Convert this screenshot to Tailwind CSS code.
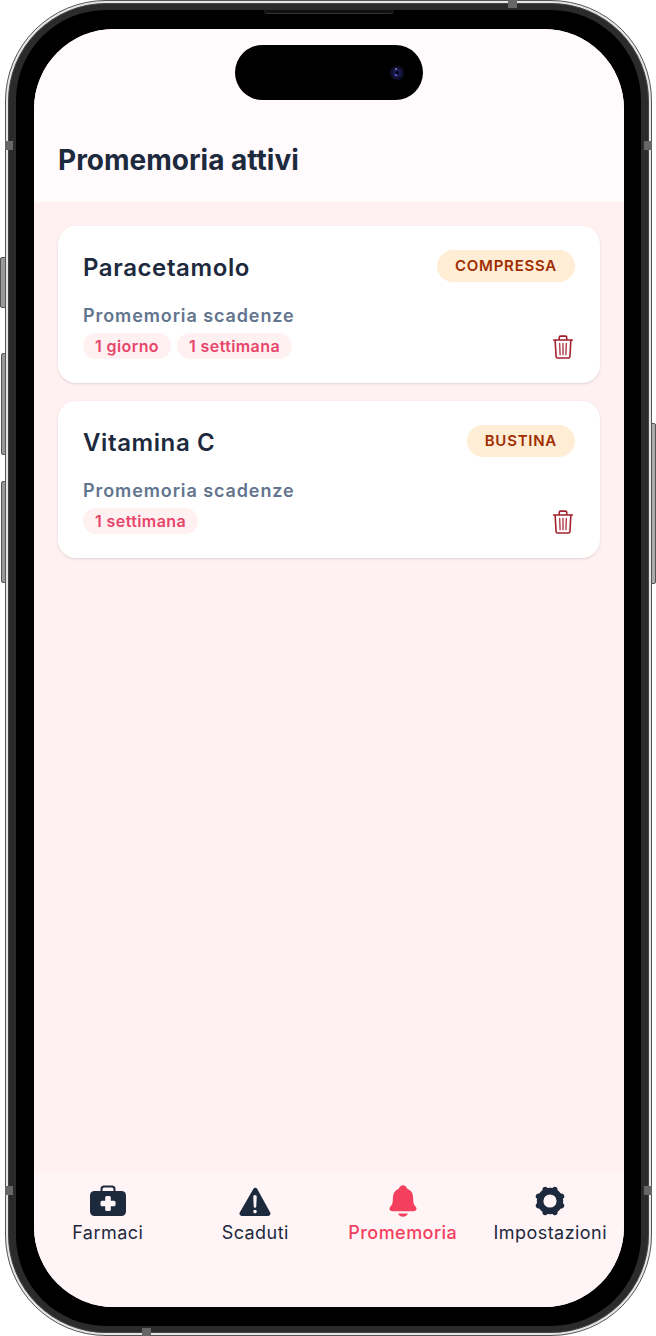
<!DOCTYPE html>
<html lang="it">
  <head>
    <meta charset="UTF-8" />
    <meta name="viewport" content="width=device-width, initial-scale=1.0" />
    <title>Promemoria attivi</title>
    <script src="https://cdn.jsdelivr.net/npm/@tailwindcss/browser@4"></script>
  </head>
  <body class="bg-white font-['Inter',sans-serif] text-slate-800">
    <div class="relative flex min-h-screen pl-[5px] pr-1">
      <!-- Side buttons -->
      <div class="absolute left-0 top-[257px] h-[51px] w-2 rounded-l-xs border border-[#555] bg-[#999]"></div>
      <div class="absolute left-px top-[353px] h-[102px] w-2 rounded-l-xs border border-[#555] bg-[#999]"></div>
      <div class="absolute left-px top-[481px] h-[102px] w-2 rounded-l-xs border border-[#555] bg-[#999]"></div>
      <div class="absolute right-0 top-[423px] h-[161px] w-2 rounded-r-xs border border-[#555] bg-[#aaa]"></div>

      <!-- Phone frame -->
      <div class="relative flex flex-1 rounded-[101px] border border-[#555] bg-[#e4e4e4] p-[2px]">
        <div class="flex flex-1 rounded-[98px] border border-[#444] bg-[#2b2b2b] px-[7px] py-[6px]">
          <div class="flex flex-1 rounded-[90px] bg-black pl-[18px] pr-[17px] py-[19px]">
            <div class="relative flex min-w-0 flex-1 flex-col overflow-hidden rounded-[80px] bg-[#fff1f1]">
              <div class="absolute left-1/2 top-4 flex h-[55px] w-[188px] -translate-x-1/2 items-center justify-end rounded-full bg-black pr-[18px]">
                <svg class="size-4" viewBox="0 0 16 16">
                  <circle cx="8" cy="8" r="7" fill="#10102c" />
                  <circle cx="8" cy="8" r="4" fill="#1d1d58" />
                  <circle cx="8" cy="8" r="2" fill="#05051a" />
                  <circle cx="7" cy="4" r="1" fill="#7d80c8" />
                  <circle cx="7" cy="10" r="1.3" fill="#5156b4" />
                </svg>
              </div>

              <header class="bg-[#fffafc] px-6 pb-6 pt-[113px]">
                <h1 class="text-[28px] leading-9 font-bold">Promemoria attivi</h1>
              </header>

              <main class="flex flex-1 flex-col gap-[18px] px-6 py-6">
                <section class="rounded-[18px] bg-white px-[25px] py-6 shadow-sm">
                  <div class="flex items-start justify-between">
                    <h2 class="pt-0.5 text-2xl leading-8 font-semibold tracking-wide">Paracetamolo</h2>
                    <span class="rounded-full bg-[#ffedd5] px-[18px] py-1.5 text-[15px] leading-5 font-semibold tracking-wider text-orange-800">COMPRESSA</span>
                  </div>
                  <div class="flex items-end justify-between pt-5">
                    <div>
                      <p class="text-lg leading-6 font-semibold tracking-wider text-slate-500">Promemoria scadenze</p>
                      <div class="flex gap-1.5 pt-[5px]">
                        <span class="rounded-full bg-[#fff1f2] px-3 text-base leading-[26px] font-semibold tracking-wide text-[#e8456a]">1 giorno</span>
                        <span class="rounded-full bg-[#fff1f2] px-3 text-base leading-[26px] font-semibold tracking-wide text-[#e8456a]">1 settimana</span>
                      </div>
                    </div>
                    <button type="button" aria-label="Elimina promemoria Paracetamolo" class="text-[#a3212c]">
                      <svg class="size-6" viewBox="0 0 512 512" fill="none" stroke="currentColor" stroke-width="34" stroke-linecap="round" stroke-linejoin="round">
                        <path d="M88 108l20 350c1 18 14 32 32 32h232c18 0 31-14 32-32l20-350M56 108h400M176 108V52a28 28 0 0128-28h104a28 28 0 0128 28v56" />
                        <path stroke-width="26" d="M256 180v240M186 180l8 240M326 180l-8 240" />
                      </svg>
                    </button>
                  </div>
                </section>

                <section class="rounded-[18px] bg-white px-[25px] py-6 shadow-sm">
                  <div class="flex items-start justify-between">
                    <h2 class="pt-0.5 text-2xl leading-8 font-semibold tracking-wide">Vitamina C</h2>
                    <span class="rounded-full bg-[#ffedd5] px-[18px] py-1.5 text-[15px] leading-5 font-semibold tracking-wider text-orange-800">BUSTINA</span>
                  </div>
                  <div class="flex items-end justify-between pt-5">
                    <div>
                      <p class="text-lg leading-6 font-semibold tracking-wider text-slate-500">Promemoria scadenze</p>
                      <div class="flex gap-1.5 pt-[5px]">
                        <span class="rounded-full bg-[#fff1f2] px-3 text-base leading-[26px] font-semibold tracking-wide text-[#e8456a]">1 settimana</span>
                      </div>
                    </div>
                    <button type="button" aria-label="Elimina promemoria Vitamina C" class="text-[#a3212c]">
                      <svg class="size-6" viewBox="0 0 512 512" fill="none" stroke="currentColor" stroke-width="34" stroke-linecap="round" stroke-linejoin="round">
                        <path d="M88 108l20 350c1 18 14 32 32 32h232c18 0 31-14 32-32l20-350M56 108h400M176 108V52a28 28 0 0128-28h104a28 28 0 0128 28v56" />
                        <path stroke-width="26" d="M256 180v240M186 180l8 240M326 180l-8 240" />
                      </svg>
                    </button>
                  </div>
                </section>
              </main>

              <nav class="grid grid-cols-4 bg-[#fff5f6] pb-[60px] pt-3">
                <a href="#farmaci" class="flex flex-col items-center text-lg leading-7 tracking-wide">
                  <svg class="size-9" viewBox="0 0 36 36">
                    <path d="M11.5 9V6a2.500 2.500 0 012.500-2.500h8A2.500 2.500 0 0124.500 6v3" fill="none" stroke="currentColor" stroke-width="2" />
                    <rect x="0" y="8" width="36" height="25" rx="4.500" fill="currentColor" />
                    <rect x="10.5" y="17.700" width="15" height="5.600" rx="1.500" fill="#fff5f6" />
                    <rect x="15.2" y="13" width="5.600" height="15" rx="1.500" fill="#fff5f6" />
                  </svg>
                  Farmaci
                </a>
                <a href="#scaduti" class="flex flex-col items-center text-lg leading-7 tracking-wide">
                  <svg class="size-9" viewBox="0 0 512 512" fill="currentColor">
                    <path transform="translate(5 12)" d="M467 409L283 73c-12-22-44-22-56 0L34 409a32 32 0 0028 47h378a32 32 0 0027-47zM251 420a26 26 0 110-52 26 26 0 010 52zm25-235l-7 138a18 18 0 01-36 0l-7-138a25 25 0 0150 0z" />
                  </svg>
                  Scaduti
                </a>
                <a href="#promemoria" aria-current="page" class="flex flex-col items-center text-lg leading-7 font-medium tracking-wide text-[#f43f5e]">
                  <svg class="size-9" viewBox="0 0 512 512" fill="currentColor">
                    <path d="M440 341l-5-6c-22-26-35-42-35-118 0-39-9-71-28-95-13-17-32-31-56-41-9-30-33-49-60-49s-51 19-60 49c-56 24-84 68-84 136 0 76-13 92-35 118l-5 6a35 35 0 00-5 38c6 13 19 21 34 21h310c15 0 28-8 34-21a35 35 0 00-5-38zM256 480a80 80 0 0070-42 4 4 0 00-3-6H189a4 4 0 00-3 6 80 80 0 0070 42z" />
                  </svg>
                  Promemoria
                </a>
                <a href="#impostazioni" class="flex flex-col items-center text-lg leading-7 tracking-wide">
                  <svg class="size-9" viewBox="0 0 36 36" fill="none" stroke="currentColor" stroke-linecap="round">
                    <circle cx="18" cy="18" r="9.900" stroke-width="6.600" />
                    <g stroke-width="5.400" transform="rotate(22.500 18 18)">
                      <path d="M18 7V5.500M18 29v1.500M7 18H5.500M29 18h1.500" />
                      <path d="M18 7V5.500M18 29v1.500M7 18H5.500M29 18h1.500" transform="rotate(45 18 18)" />
                    </g>
                  </svg>
                  Impostazioni
                </a>
              </nav>
            </div>
          </div>
        </div>

        <!-- Antenna bands and speaker slot -->
        <div class="absolute -left-px top-[140px] h-[9px] w-2 bg-[#666]"></div>
        <div class="absolute -right-px top-[140px] h-[9px] w-2 bg-[#666]"></div>
        <div class="absolute -left-px bottom-[140px] h-[9px] w-2 bg-[#666]"></div>
        <div class="absolute -right-px bottom-[140px] h-[9px] w-2 bg-[#666]"></div>
        <div class="absolute -top-px right-[134px] h-2 w-[9px] bg-[#666]"></div>
        <div class="absolute -bottom-px left-[136px] h-2 w-[9px] bg-[#666]"></div>
        <div class="absolute left-1/2 top-[9px] h-1 w-[130px] -translate-x-1/2 rounded-b-sm border-b border-[#333] bg-[#111]"></div>
      </div>
    </div>
  </body>
</html>
